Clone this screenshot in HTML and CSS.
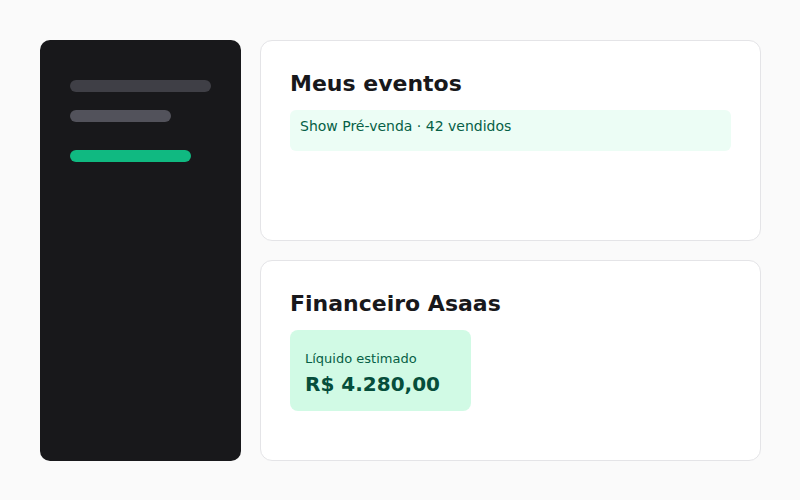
FILE: index.html
```html
<!DOCTYPE html>
<html lang="pt-BR">
<head>
<meta charset="utf-8">
<link rel="stylesheet" href="styles.css">
</head>
<body>
<div class="app">
  <aside class="sidebar">
    <div class="bar bar-1"></div>
    <div class="bar bar-2"></div>
    <div class="bar bar-active"></div>
  </aside>
  <section class="card">
    <h2 class="card-title">Meus eventos</h2>
    <div class="event-pill">Show Pré-venda · 42 vendidos</div>
  </section>
  <section class="card">
    <h2 class="card-title">Financeiro Asaas</h2>
    <div class="stat">
      <div class="stat-label">Líquido estimado</div>
      <div class="stat-value">R$ 4.280,00</div>
    </div>
  </section>
</div>
</body>
</html>
```
FILE: styles.css
```css
html, body {
  margin: 0;
  padding: 0;
  background: #fafafa;
  font-family: "DejaVu Sans", sans-serif;
}
.app {
  padding: 40px;
  display: grid;
  grid-template-columns: 201px 501px;
  grid-template-rows: 201px 201px;
  column-gap: 19px;
  row-gap: 19px;
}
.sidebar {
  grid-row: 1 / span 2;
  background: #18181b;
  border-radius: 10px;
  padding: 40px 30px;
  display: flex;
  flex-direction: column;
  align-items: flex-start;
}
.bar {
  height: 12px;
  border-radius: 6px;
}
.bar-1 { width: 141px; background: #3f3f46; }
.bar-2 { width: 101px; background: #52525b; margin-top: 18px; }
.bar-active { width: 121px; background: #10b981; margin-top: 28px; }
.card {
  background: #fff;
  border: 1px solid #e4e4e7;
  border-radius: 12px;
  padding: 29px;
}
.card-title {
  margin: 0 0 12px;
  font-size: 22px;
  font-weight: bold;
  color: #18181b;
  line-height: 28px;
}
.event-pill {
  background: #ecfdf5;
  color: #065f46;
  font-size: 14px;
  line-height: 20px;
  padding: 6px 10px 15px;
  border-radius: 6px;
}
.stat {
  width: 151px;
  background: #d1fae5;
  border-radius: 8px;
  padding: 20px 15px 14px;
}
.stat-label {
  font-size: 13px;
  color: #065f46;
  line-height: 17px;
}
.stat-value {
  font-size: 20px;
  font-weight: bold;
  color: #064e3b;
  line-height: 26px;
  margin-top: 4px;
}
```
